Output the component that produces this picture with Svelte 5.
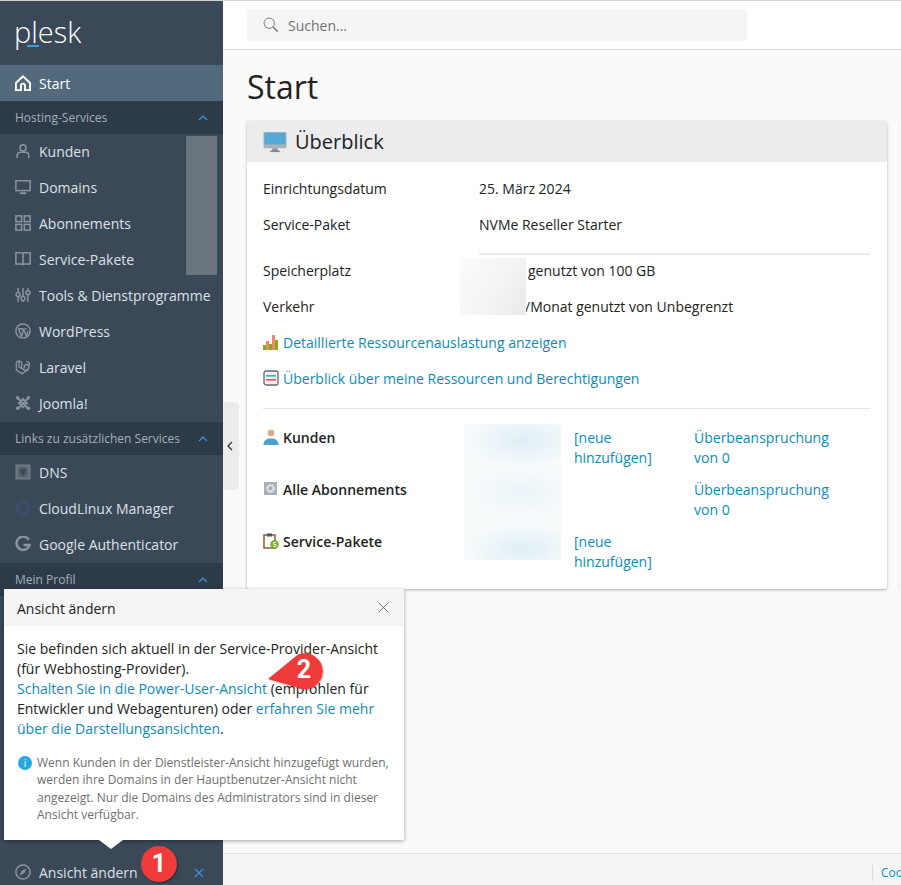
<script>
	const icons = {
		user: '<circle cx="9" cy="5.500" r="3.400"/><path d="M2.500 17v-3c0-2.200 1.800-3.500 3.500-3.500h6c1.700 0 3.500 1.300 3.500 3.500v3"/>',
		monitor: '<rect x="1" y="2" width="16" height="11"/><path d="M5.500 16h7" stroke-width="2.200"/>',
		grid: '<rect x="1" y="1" width="6.500" height="6.500"/><rect x="10.500" y="1" width="6.500" height="6.500"/><rect x="1" y="10.500" width="6.500" height="6.500"/><rect x="10.500" y="10.500" width="6.500" height="6.500"/>',
		book: '<path d="M1 2h6.500c1 0 1.500.5 1.500 1.500V16c0-1-.5-1.500-1.500-1.500H1zM17 2h-6.500c-1 0-1.500.5-1.500 1.500V16c0-1 .5-1.500 1.500-1.500H17z"/>',
		tools: '<path d="M3.500 1v5M3.500 11v6M9 1v10M9 15v2M14.500 1v3M14.500 9v8"/><circle cx="3.500" cy="8.500" r="2.300"/><circle cx="9" cy="13" r="2.300"/><circle cx="14.500" cy="6.500" r="2.300"/>',
		wp: '<circle cx="9" cy="9" r="8" stroke-width="1.700"/><path d="M4 6.500l3.300 8.500 2.200-6-1-2.500M3.500 6.500h5.500M9.500 6.500l3.200 8.500 1.800-6M11 6.500h2" stroke-width="1.600"/>',
		laravel: '<path d="M1.500 3.500l3-1.500 3 1.500v7l4 2.500 4-2.300V7.500L13 6l-2.500 1.500v3M7.500 10.500L4.500 9V2M1.500 3.500v9l6.500 4 7.500-4.800M13 2.500l3 1.500v3.500" stroke-width="1.500"/>',
		joomla: '<path d="M3 3.500l11.500 11.500M15 3.500L3.500 15M9 4.500L4.500 9 9 13.500 13.500 9z" stroke-width="2.300"/><circle cx="3" cy="3" r="2" fill="#8b949d" stroke="none"/><circle cx="15" cy="3" r="2" fill="#8b949d" stroke="none"/><circle cx="3" cy="15" r="2" fill="#8b949d" stroke="none"/><circle cx="15" cy="15" r="2" fill="#8b949d" stroke="none"/>',
		dns: '<rect x="0.500" y="0.500" width="17" height="17" fill="#6f7983" stroke="none"/><rect x="3" y="3" width="12" height="12" fill="#586470" stroke="none"/><path d="M6 5h6v6l-3 3-3-3z" fill="#3f4b57" stroke="none"/>',
		cloud: '<circle cx="9" cy="9" r="6.500" stroke="#3e5a8c" stroke-width="1.800" stroke-dasharray="1.500 1"/>',
		google: '<path d="M15.600 4.200A7.500 7.500 0 1 0 16.500 10H9.500" stroke-width="2.800"/>',
		compass: '<circle cx="9" cy="9" r="8"/><path d="M13 5L7.700 7.700 5 13l5.300-2.700z" fill="#8b949d" stroke="none"/>'
	};

	const hosting = [
		['Kunden', 'user'],
		['Domains', 'monitor'],
		['Abonnements', 'grid'],
		['Service-Pakete', 'book'],
		['Tools & Dienstprogramme', 'tools'],
		['WordPress', 'wp'],
		['Laravel', 'laravel'],
		['Joomla!', 'joomla']
	];
	const links = [
		['DNS', 'dns'],
		['CloudLinux Manager', 'cloud'],
		['Google Authenticator', 'google']
	];
</script>

{#snippet navItem(label, icon)}
	<a class="nav-item" href="#top">
		<svg class="nav-icon" viewBox="0 0 18 18">{@html icons[icon]}</svg>
		<span>{label}</span>
	</a>
{/snippet}

{#snippet section(label)}
	<div class="nav-section">
		<span>{label}</span>
		<svg viewBox="0 0 10 6"><path d="M1 5l4-4 4 4" /></svg>
	</div>
{/snippet}

<div class="page">
	<aside class="sidebar">
		<div class="logo"><span>plesk</span><i></i></div>
		<nav class="nav">
			<a class="nav-item active" href="#top">
				<svg class="nav-icon" viewBox="0 0 18 18">
					<path d="M9 1.500L1 9v8h5.700v-5a2.300 2.300 0 0 1 4.600 0v5H17V9z" stroke-width="2.200" />
				</svg>
				<span>Start</span>
			</a>
			{@render section('Hosting-Services')}
			{#each hosting as [label, icon]}
				{@render navItem(label, icon)}
			{/each}
			{@render section('Links zu zusätzlichen Services')}
			{#each links as [label, icon]}
				{@render navItem(label, icon)}
			{/each}
			{@render section('Mein Profil')}
		</nav>
		<div class="sidebar-foot">
			<a class="nav-item" href="#top">
				<svg class="nav-icon" viewBox="0 0 18 18">{@html icons.compass}</svg>
				<span>Ansicht ändern</span>
			</a>
			<svg class="foot-close" viewBox="0 0 10 10"><path d="M1 1l8 8M9 1L1 9" /></svg>
		</div>
	</aside>

	<div class="main">
		<header class="topbar">
			<div class="search">
				<svg viewBox="0 0 18 18"><circle cx="7" cy="7" r="5.800" /><path d="M11.300 11.300l5 5" stroke-width="1.800" /></svg>
				<span>Suchen...</span>
			</div>
		</header>

		<main class="content">
			<h1>Start</h1>
			<div class="cards">
				<section class="card">
					<div class="card-head">
						<svg viewBox="0 0 25 22">
							<rect x="0.500" y="0.500" width="24" height="17" rx="1.500" fill="#a9b2b9" />
							<rect x="1.500" y="1.500" width="22" height="12" fill="#55a9d6" />
							<path d="M10 17.500h5l1 3H9z" fill="#8b969e" />
							<rect x="7.500" y="20" width="10" height="1.500" fill="#7b868e" />
						</svg>
						<h2>Überblick</h2>
					</div>
					<div class="card-body">
						<dl class="info">
							<dt>Einrichtungsdatum</dt>
							<dd>25. März 2024</dd>
							<dt>Service-Paket</dt>
							<dd>NVMe Reseller Starter</dd>
						</dl>
						<div class="info-rule"></div>
						<dl class="info">
							<dt>Speicherplatz</dt>
							<dd><span class="gap"></span>genutzt von 100 GB</dd>
							<dt>Verkehr</dt>
							<dd><span class="gap short"></span>/Monat genutzt von Unbegrenzt</dd>
						</dl>
						<div class="res-link">
							<svg viewBox="0 0 16 16">
								<rect x="0" y="11" width="3" height="5" fill="#7fae1c" />
								<rect x="3" y="7" width="3" height="9" fill="#f2836f" />
								<rect x="6" y="10" width="3" height="6" fill="#7fae1c" />
								<rect x="9" y="1" width="3" height="15" fill="#f2836f" />
								<rect x="12" y="6" width="3" height="10" fill="#7fae1c" />
							</svg>
							<a href="#top">Detaillierte Ressourcenauslastung anzeigen</a>
						</div>
						<div class="res-link">
							<svg viewBox="0 0 16 16">
								<rect x="1" y="1" width="14" height="14" rx="2" fill="#eef0f2" stroke="#5f6a75" stroke-width="1.300" />
								<rect x="3" y="5" width="10" height="1.600" fill="#39a9dc" />
								<rect x="3" y="9" width="10" height="1.600" fill="#e8584f" />
							</svg>
							<a href="#top">Überblick über meine Ressourcen und Berechtigungen</a>
						</div>
						<div class="stats">
							<div class="stat-name">
								<svg viewBox="0 0 16 16">
									<circle cx="8" cy="4" r="3.300" fill="#dfa986" />
									<path d="M0.500 16c0-4 2.500-6 5.500-6.500h4c3 .5 5.500 2.500 5.500 6.500z" fill="#4f9fcf" />
								</svg>
								<b>Kunden</b>
							</div>
							<div class="stat-new"><a href="#top">[neue hinzufügen]</a></div>
							<div class="stat-over"><a href="#top">Überbeanspruchung von 0</a></div>

							<div class="stat-name">
								<svg viewBox="0 0 16 16">
									<rect x="1" y="1" width="13" height="13" fill="#a9afb6" />
									<circle cx="7.500" cy="7.500" r="3.200" fill="none" stroke="#eceef0" stroke-width="2.200" stroke-dasharray="2 0.600" />
								</svg>
								<b>Alle Abonnements</b>
							</div>
							<div class="stat-new"></div>
							<div class="stat-over"><a href="#top">Überbeanspruchung von 0</a></div>

							<div class="stat-name">
								<svg viewBox="0 0 16 16">
									<rect x="1" y="2" width="11" height="13" fill="#fff" stroke="#9a5a34" stroke-width="1.500" />
									<rect x="4" y="0.500" width="5" height="3" fill="#4c5661" />
									<circle cx="11.500" cy="11.500" r="4.200" fill="#6fb01e" />
									<path d="M13 9.500h-2.500v2h2.500v2H10" fill="none" stroke="#fff" stroke-width="0.900" />
								</svg>
								<b>Service-Pakete</b>
							</div>
							<div class="stat-new"><a href="#top">[neue hinzufügen]</a></div>
							<div class="stat-over"></div>
						</div>
					</div>
				</section>
				<section class="card-next"></section>
			</div>
		</main>

		<footer class="footer">
			<span class="footer-sep"></span>
			<a href="#top">Cookies</a>
		</footer>
	</div>

	<!-- redaction patches from the original screenshot -->
	<div class="patch patch-nav"></div>
	<div class="patch patch-usage"></div>
	<div class="patch patch-stats"></div>

	<button class="collapse" aria-label="Einklappen">
		<svg viewBox="0 0 6 10"><path d="M5 1L1 5l4 4" /></svg>
	</button>

	<div class="popover">
		<div class="pop-head">
			<span>Ansicht ändern</span>
			<svg viewBox="0 0 12 12"><path d="M1 1l10 10M11 1L1 11" /></svg>
		</div>
		<div class="pop-body">
			<p>
				Sie befinden sich aktuell in der Service-Provider-Ansicht (für Webhosting-Provider).<br />
				<a href="#top">Schalten Sie in die Power-User-Ansicht</a> (empfohlen für Entwickler und Webagenturen) oder
				<a href="#top">erfahren Sie mehr über die Darstellungsansichten</a>.
			</p>
			<p class="note">
				<span class="note-i">i</span>Wenn Kunden in der Dienstleister-Ansicht hinzugefügt wurden, werden ihre Domains in der Hauptbenutzer-Ansicht nicht angezeigt. Nur die Domains des Administrators sind in dieser Ansicht verfügbar.
			</p>
		</div>
		<i class="pop-arrow"></i>
	</div>

	<!-- screenshot annotations -->
	<div class="mark mark-one">1</div>
	<div class="mark-two">
		<svg viewBox="0 0 56 38">
			<path d="M0 27L30 2.500A18 18 0 1 1 28 35z" fill="#ef3b39" />
		</svg>
		<span>2</span>
	</div>
</div>

<style>
	:global(body) {
		font-family: 'Open Sans', sans-serif;
		font-size: 14px;
		color: #222;
	}
	.page {
		position: relative;
		display: flex;
		height: 885px;
		overflow: hidden;
		background: #fafafa;
		border-top: 1px solid #d4d4d4;
		box-sizing: border-box;
	}
	a {
		color: #0a8cbd;
		text-decoration: none;
	}

	/* sidebar */
	.sidebar {
		position: relative;
		flex: 0 0 223px;
		background: #3a4858;
		color: #dde1e5;
	}
	.logo {
		position: relative;
		height: 64px;
		padding: 9px 0 0 14px;
		box-sizing: border-box;
		font-size: 29px;
		font-weight: 300;
		line-height: 44px;
		color: #fff;
	}
	.logo i {
		position: absolute;
		left: 27px;
		top: 44px;
		width: 12px;
		height: 2px;
		background: #3d9be0;
	}
	.nav-item {
		display: flex;
		align-items: center;
		gap: 8px;
		height: 36px;
		padding: 0 0 2px 15px;
		box-sizing: border-box;
		color: #dde1e5;
		white-space: nowrap;
	}
	.nav-item.active {
		padding-bottom: 0;
		background: #536a7d;
		color: #fff;
	}
	.nav-item.active .nav-icon {
		stroke: #fff;
	}
	.nav-icon {
		flex: none;
		width: 16px;
		height: 16px;
		fill: none;
		stroke: #8b949d;
		stroke-width: 1.700;
	}
	.nav-section {
		display: flex;
		align-items: center;
		justify-content: space-between;
		height: 33px;
		padding: 0 15px;
		background: #2d3a48;
		color: #a6afb8;
		font-size: 12px;
	}
	.nav-section svg {
		width: 10px;
		height: 6px;
		fill: none;
		stroke: #3d9be0;
		stroke-width: 1.100;
	}
	.sidebar-foot {
		position: absolute;
		left: 0;
		right: 0;
		bottom: -6px;
	}
	.foot-close {
		position: absolute;
		right: 19px;
		top: 13px;
		width: 10px;
		height: 10px;
		fill: none;
		stroke: #3d8fdc;
		stroke-width: 1.200;
	}

	/* main column */
	.main {
		flex: 1;
		min-width: 0;
		display: flex;
		flex-direction: column;
	}
	.topbar {
		flex: none;
		height: 49px;
		box-sizing: border-box;
		padding: 8px 24px;
		background: #fff;
		border-bottom: 1px solid #d6d6d6;
	}
	.search {
		display: flex;
		align-items: center;
		gap: 9px;
		width: 500px;
		height: 32px;
		padding-left: 16px;
		box-sizing: border-box;
		border-radius: 3px;
		background: #f5f5f5;
		color: #737373;
	}
	.search svg {
		width: 16px;
		height: 16px;
		fill: none;
		stroke: #777;
		stroke-width: 1.100;
	}
	.content {
		flex: 1;
		padding: 0 0 0 24px;
		min-height: 0;
		overflow: hidden;
	}
	h1 {
		margin: 0;
		padding-top: 15px;
		height: 71px;
		box-sizing: border-box;
		font-size: 32px;
		font-weight: 400;
		line-height: 44px;
		color: #222;
	}
	.cards {
		display: flex;
		gap: 13px;
		padding-bottom: 6px;
	}
	.card {
		flex: none;
		width: 640px;
		height: 468px;
		border-radius: 3px;
		background: #fff;
		box-shadow: 0 1px 3px rgba(0, 0, 0, 0.3);
	}
	.card-next {
		flex: none;
		width: 200px;
		height: 468px;
		background: #fff;
		box-shadow: 0 0 2px rgba(0, 0, 0, 0.12);
	}
	.card-head {
		display: flex;
		align-items: center;
		gap: 8px;
		height: 41px;
		padding-left: 16px;
		background: #ececec;
		border-radius: 3px 3px 0 0;
	}
	.card-head svg {
		width: 24px;
		height: 22px;
	}
	h2 {
		margin: 0;
		font-size: 20px;
		font-weight: 400;
		color: #222;
	}
	.card-body {
		padding: 8px 17px 0 16px;
	}
	.info {
		display: grid;
		grid-template-columns: 216px 1fr;
		grid-auto-rows: 36px;
		align-items: center;
		margin: 0;
	}
	.info dd {
		margin: 0;
		white-space: nowrap;
	}
	.info-rule {
		height: 2px;
		margin: 11px 0 -3px 216px;
		background: #ececec;
	}
	.gap {
		display: inline-block;
		width: 49px;
	}
	.gap.short {
		width: 46px;
	}
	.res-link {
		display: flex;
		align-items: center;
		gap: 4px;
		height: 36px;
	}
	.res-link svg {
		flex: none;
		width: 16px;
		height: 16px;
	}
	.stats {
		display: grid;
		grid-template-columns: 311px 120px 150px;
		grid-auto-rows: 52px;
		margin-top: 12px;
		padding-top: 19px;
		border-top: 1px solid #e6e6e6;
		line-height: 20px;
	}
	.stat-name {
		display: flex;
		align-items: flex-start;
		gap: 4px;
	}
	.stat-name svg {
		flex: none;
		width: 16px;
		height: 16px;
		margin-top: 1px;
	}
	.stat-name b {
		font-weight: 600;
		color: #222;
	}
	.stat-new {
		padding-right: 20px;
	}

	/* overlays */
	.patch {
		position: absolute;
	}
	.patch-nav {
		left: 186px;
		top: 135px;
		width: 31px;
		height: 139px;
		background: #6a7580;
	}
	.patch-usage {
		left: 460px;
		top: 257px;
		width: 66px;
		height: 57px;
		background: linear-gradient(120deg, #fbfbfb, #f4f4f4 55%, #e8e9ea);
	}
	.patch-stats {
		left: 464px;
		top: 423px;
		width: 97px;
		height: 136px;
		background:
			radial-gradient(ellipse 60px 28px at 60% 12%, #deeef6, transparent),
			radial-gradient(ellipse 60px 26px at 60% 50%, #eaf4f8, transparent),
			radial-gradient(ellipse 60px 26px at 60% 92%, #dfeef5, transparent),
			#f8fbfc;
	}
	.collapse {
		position: absolute;
		left: 223px;
		top: 401px;
		width: 16px;
		height: 88px;
		padding: 0;
		border: 0;
		border-radius: 0 4px 4px 0;
		background: #ececec;
	}
	.collapse svg {
		display: block;
		width: 6px;
		height: 10px;
		margin: 0 auto 0 4px;
		fill: none;
		stroke: #333;
		stroke-width: 1.300;
	}
	.popover {
		position: absolute;
		left: 4px;
		top: 588px;
		width: 400px;
		height: 251px;
		background: #fff;
		box-shadow: 0 1px 4px rgba(0, 0, 0, 0.35);
	}
	.pop-head {
		display: flex;
		align-items: center;
		justify-content: space-between;
		height: 37px;
		padding: 2px 15px 0 13px;
		box-sizing: border-box;
		background: #f5f5f5;
	}
	.pop-head svg {
		width: 11px;
		height: 11px;
		margin-bottom: 2px;
		fill: none;
		stroke: #666;
		stroke-width: 1;
	}
	.pop-body {
		padding: 13px 13px;
		line-height: 20px;
	}
	.pop-body p {
		margin: 0;
	}
	.pop-body .note {
		position: relative;
		margin-top: 15px;
		padding-left: 20px;
		font-size: 12px;
		line-height: 17.400px;
		color: #6f6f6f;
	}
	.note-i {
		position: absolute;
		left: 1px;
		top: 2px;
		width: 14px;
		height: 14px;
		border-radius: 50%;
		background: #22a7e0;
		color: #fff;
		font-size: 10px;
		line-height: 14px;
		text-align: center;
	}
	.pop-arrow {
		position: absolute;
		left: 95px;
		bottom: -9px;
		width: 0;
		height: 0;
		border-left: 12px solid transparent;
		border-right: 12px solid transparent;
		border-top: 9px solid #fff;
	}
	.mark {
		position: absolute;
		left: 141px;
		top: 845px;
		width: 36px;
		height: 36px;
		border-radius: 50%;
		background: #ef3b39;
		box-shadow: 1px 1px 2px rgba(0, 0, 0, 0.35);
		color: #fff;
		font: 700 25px/36px Roboto, sans-serif;
		text-align: center;
	}
	.mark-two {
		position: absolute;
		left: 268px;
		top: 651px;
		width: 56px;
		height: 38px;
	}
	.mark-two svg {
		display: block;
		width: 56px;
		height: 38px;
		filter: drop-shadow(1px 1px 1px rgba(0, 0, 0, 0.3));
	}
	.mark-two span {
		position: absolute;
		left: 26px;
		top: 0;
		width: 20px;
		color: #fff;
		font: 700 25px/36px Roboto, sans-serif;
		text-align: center;
	}

	/* footer */
	.footer {
		flex: none;
		display: flex;
		align-items: center;
		height: 32px;
		padding: 6px 0 0 649px;
		gap: 8px;
		box-sizing: border-box;
		background: #f5f5f5;
		border-top: 1px solid #e2e2e2;
		font-size: 12px;
		white-space: nowrap;
		overflow: hidden;
	}
	.footer-sep {
		flex: none;
		width: 1px;
		height: 16px;
		background: #d8d8d8;
	}
</style>
